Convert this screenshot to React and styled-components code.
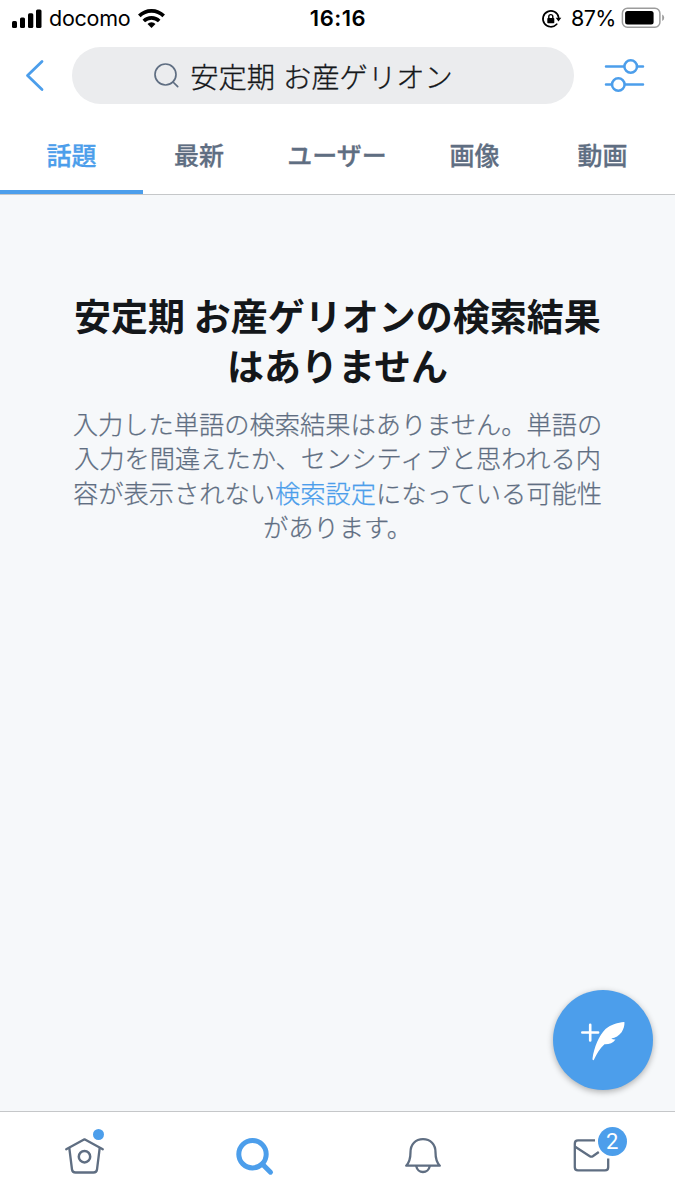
import React, { useState } from 'react';
import styled, { createGlobalStyle } from 'styled-components';

const colors = {
    blue: '#4c9eeb',
    gray: '#5f6e82',
    text: '#14171a',
    page: '#f6f8fa',
    line: '#c5c7c9',
};

const GlobalStyle = createGlobalStyle`
    * {
        box-sizing: border-box;
    }

    body {
        margin: 0;
        font-family: Inter, 'Noto Sans CJK JP', sans-serif;
        background-color: #fff;
    }

    button {
        padding: 0;
        border: none;
        background: none;
        font-family: inherit;
        cursor: pointer;
    }
`;

const Screen = styled.div`
    display: flex;
    flex-direction: column;
    height: 1200px;
    width: 675px;
    overflow: hidden;
    background-color: #fff;
`;

const Icon = styled.svg`
    display: block;
    flex: none;
    overflow: visible;
    fill: none;
    stroke: ${props => props.color || 'none'};
    stroke-linecap: ${props => props.$cap || 'round'};
    stroke-linejoin: round;
`;

const StatusBar = styled.div`
    display: grid;
    grid-template-columns: 1fr auto 1fr;
    align-items: center;
    height: 37px;
    padding: 0 11px 0 12px;
    color: #000;
    font-size: 21.5px;
    line-height: 37px;
`;

const StatusGroup = styled.div`
    display: flex;
    align-items: center;
    justify-content: ${props => props.$align || 'flex-start'};
    gap: ${props => props.$gap};
`;

const Carrier = styled.span`
    margin-left: -1px;
    letter-spacing: -0.25px;
`;

const Clock = styled.span`
    font-size: 22px;
    font-weight: 600;
    letter-spacing: 0.5px;
`;

const Percent = styled.span`
    margin: 0 -2px 0 2px;
    letter-spacing: -0.5px;
`;

const Header = styled.header`
    display: flex;
    align-items: center;
    height: 77px;
    padding: 0 31px 0 25px;
`;

const SearchField = styled.div`
    display: flex;
    align-items: center;
    justify-content: center;
    gap: 10px;
    width: 502px;
    height: 57px;
    margin: 0 31px 0 27px;
    border-radius: 29px;
    background-color: #ebecee;
    color: ${colors.text};
    font-size: 28.3px;
    font-weight: 300;
    padding-right: 39px;
`;

const Query = styled.span`
    padding-top: 5px;
    line-height: 52px;
    white-space: nowrap;
    -webkit-text-stroke: 0.3px currentColor;
`;

const Tabs = styled.nav`
    display: flex;
    height: 81px;
    border-bottom: 1px solid ${colors.line};
`;

const Tab = styled.button`
    display: flex;
    align-items: center;
    justify-content: center;
    flex: none;
    width: ${props => props.$width}px;
    padding-top: 4px;
    border-bottom: 4px solid ${props => (props.$active ? colors.blue : 'transparent')};
    color: ${props => (props.$active ? colors.blue : colors.gray)};
    font-size: 25px;
    font-weight: 500;
    -webkit-text-stroke: 0.3px currentColor;
    white-space: nowrap;
`;

const Results = styled.main`
    flex: 1;
    display: flex;
    flex-direction: column;
    align-items: center;
    position: relative;
    padding-top: 98px;
    background-color: ${colors.page};
    text-align: center;
`;

const Title = styled.h1`
    margin: 0;
    color: ${colors.text};
    font-size: 37px;
    font-weight: 700;
    line-height: 50px;
    white-space: nowrap;
`;

const Message = styled.p`
    margin: 15px 0 0;
    color: ${colors.gray};
    font-size: 25.25px;
    font-weight: 300;
    line-height: 34.3px;
    white-space: nowrap;
    -webkit-text-stroke: 0.25px currentColor;
`;

const SettingsLink = styled.a`
    color: ${colors.blue};
    text-decoration: none;
`;

const ComposeButton = styled.button`
    position: absolute;
    right: 22px;
    bottom: 21px;
    display: flex;
    align-items: center;
    justify-content: center;
    width: 100px;
    height: 100px;
    border-radius: 50%;
    background-color: ${colors.blue};
    box-shadow: 0 2px 6px rgba(0, 0, 0, 0.3);
`;

const BottomBar = styled.nav`
    display: grid;
    grid-template-columns: repeat(4, 1fr);
    height: 89px;
    padding-left: 1px;
    border-top: 1px solid ${colors.line};
`;

const BarItem = styled.button`
    display: flex;
    justify-content: center;
    padding-top: 16px;
`;

const IconWrap = styled.span`
    position: relative;
    display: block;
    height: 56px;
`;

const Dot = styled.span`
    position: absolute;
    top: 1px;
    right: 1px;
    width: 11px;
    height: 11px;
    border-radius: 50%;
    background-color: ${colors.blue};
`;

const Badge = styled.span`
    position: absolute;
    top: -1px;
    right: -18px;
    width: 29px;
    height: 29px;
    border-radius: 50%;
    background-color: ${colors.blue};
    color: #fff;
    font-family: Roboto, sans-serif;
    font-size: 22px;
    font-weight: 400;
    line-height: 29px;
    text-align: center;
`;

const tabs = [
    { label: '話題', width: 143 },
    { label: '最新', width: 112 },
    { label: 'ユーザー', width: 164 },
    { label: '画像', width: 111 },
    { label: '動画', width: 145 },
];

const Signal = () => (
    <Icon width="30" height="20" viewBox="0 0 30 20">
        <g fill="#000">
            <rect x="0" y="12" width="5" height="7" rx="1.5" />
            <rect x="8" y="8.5" width="5" height="10.5" rx="1.5" />
            <rect x="16" y="4.2" width="5.3" height="14.8" rx="1.5" />
            <rect x="24" y="0.5" width="5.5" height="18.5" rx="1.5" />
        </g>
    </Icon>
);

const Wifi = () => (
    <Icon width="27" height="20" viewBox="0 0 27 20" color="#000" $cap="butt" strokeWidth="3.6">
        <path d="M1.3 6.9a17.3 17.3 0 0 1 24.4 0" />
        <path d="M5.8 12a11 11 0 0 1 15.4 0" />
        <path d="M13.5 19l-4-4a5.7 5.7 0 0 1 8 0z" fill="#000" stroke="none" />
    </Icon>
);

const RotationLock = () => (
    <Icon width="20" height="18" viewBox="0 0 20 18" color="#000" strokeWidth="1.7">
        <path d="M14.7 14.2A7.9 7.9 0 1 1 16.6 7.3" />
        <path d="M13.7 7.7h5.6l-2.8 3.7z" fill="#000" stroke="none" />
        <rect x="5.3" y="8" width="7" height="5.2" rx="0.7" fill="#000" stroke="none" />
        <path d="M6.8 8V6.6a2 2 0 0 1 4 0V8" strokeWidth="1.4" />
    </Icon>
);

const Battery = () => (
    <Icon width="43" height="21" viewBox="0 0 43 21">
        <rect x="1.4" y="0.2" width="37.5" height="19" rx="5" stroke="#9c9c9c" strokeWidth="1.5" />
        <rect x="4.1" y="2.9" width="28.5" height="13.6" rx="2.5" fill="#000" />
        <path d="M41.2 6.5q2 1 2 3.3t-2 3.3z" fill="#9c9c9c" />
    </Icon>
);

const Back = () => (
    <Icon width="20" height="32" viewBox="0 0 20 32" color={colors.blue} strokeWidth="2.8">
        <path d="M17 1.5L2.5 15.500 17 29.500" />
    </Icon>
);

const SearchOutline = () => (
    <Icon width="26" height="26" viewBox="0 0 26 26" color={colors.gray} strokeWidth="1.7">
        <circle cx="11.5" cy="11.5" r="10.5" />
        <path d="M19 19l4.7 4.7" />
    </Icon>
);

const Filters = () => (
    <Icon width="39" height="34" viewBox="0 0 39 34" color={colors.blue} strokeWidth="2.5">
        <path d="M1 7.5h18M32 7.5h6M1 25.5h6M20 25.5h18" />
        <circle cx="25.7" cy="7.5" r="6.3" />
        <circle cx="13.3" cy="25.5" r="6.3" />
    </Icon>
);

const Feather = () => (
    <Icon width="44" height="40" viewBox="0 0 44 40">
        <path d="M1.3 12.5h15.8M9.2 4.8v15.6" stroke="#fff" strokeWidth="2.6" />
        <path
            d="M43 2C37 2.700 30 4.500 24.500 9C18 15.500 13 27.500 11.500 38.500C11.400 40.700 12.700 40.700 13.300 39C15.500 34 19 28.500 23.500 24.300C28 24.500 32 23 34.500 19.500C33 19.800 31.500 19.500 30.300 18.600C34.500 18 38 15.700 40.600 12.300C42.600 9 43.500 6 43.500 2.600Q43.500 2 43 2z"
            fill="#fff"
        />
    </Icon>
);

const Home = () => (
    <Icon width="40" height="48" viewBox="0 0 40 48" color={colors.gray} strokeWidth="2.3">
        <path d="M1.2 21.2L19.500 11.300l18.300 9.900" />
        <path d="M4.300 20l2.700 21.500q.4 3 3.500 3h18q3.100 0 3.500-3L34.700 20" />
        <circle cx="19.500" cy="28.700" r="5.700" strokeWidth="2.5" />
    </Icon>
);

const SearchBold = () => (
    <Icon width="36" height="48" viewBox="0 0 36 48" color={colors.blue} strokeWidth="5">
        <circle cx="16.500" cy="26.200" r="13.700" />
        <path d="M26.500 36.200l8 8" />
    </Icon>
);

const Bell = () => (
    <Icon width="35" height="48" viewBox="0 0 35 48" color={colors.gray} strokeWidth="2.3">
        <path d="M1.200 37.700C4.500 34.200 5.500 30.200 5.500 24.200C5.500 16.200 10.500 11.200 18 11.200S30.500 16.200 30.500 24.200C30.500 30.200 31.500 34.200 34.800 37.700z" />
        <path d="M11.300 38.200a6.800 7 0 0 0 13.400 0" />
    </Icon>
);

const Mail = () => (
    <Icon width="36" height="48" viewBox="0 0 36 48" color={colors.gray} $cap="butt" strokeWidth="2.3">
        <path d="M22 12.400H5Q1.800 12.400 1.800 15.700v23.500q0 3.200 3.200 3.200h27q3.200 0 3.200-3.200V30.500" />
        <path d="M1.800 18.500l15 9.700q1.500 1 3 0l6-4.200" />
    </Icon>
);

function App() {
    const [activeTab, setActiveTab] = useState('話題');

    return (
        <>
            <GlobalStyle />
            <Screen>
                <StatusBar>
                    <StatusGroup $gap="8px">
                        <Signal />
                        <Carrier>docomo</Carrier>
                        <Wifi />
                    </StatusGroup>
                    <Clock>16:16</Clock>
                    <StatusGroup $gap="7px" $align="flex-end">
                        <RotationLock />
                        <Percent>87%</Percent>
                        <Battery />
                    </StatusGroup>
                </StatusBar>
                <Header>
                    <button aria-label="戻る"><Back /></button>
                    <SearchField>
                        <SearchOutline />
                        <Query>安定期 お産ゲリオン</Query>
                    </SearchField>
                    <button aria-label="フィルター"><Filters /></button>
                </Header>
                <Tabs>
                    {tabs.map(({ label, width }) => (
                        <Tab
                            key={label}
                            $width={width}
                            $active={label === activeTab}
                            onClick={() => setActiveTab(label)}
                        >
                            {label}
                        </Tab>
                    ))}
                </Tabs>
                <Results>
                    <Title>
                        安定期 お産ゲリオンの検索結果<br />
                        はありません
                    </Title>
                    <Message>
                        入力した単語の検索結果はありません。単語の<br />
                        入力を間違えたか、センシティブと思われる内<br />
                        容が表示されない<SettingsLink>検索設定</SettingsLink>になっている可能性<br />
                        があります。
                    </Message>
                    <ComposeButton aria-label="ツイート"><Feather /></ComposeButton>
                </Results>
                <BottomBar>
                    <BarItem aria-label="ホーム">
                        <IconWrap><Home /><Dot /></IconWrap>
                    </BarItem>
                    <BarItem aria-label="検索">
                        <IconWrap><SearchBold /></IconWrap>
                    </BarItem>
                    <BarItem aria-label="通知">
                        <IconWrap><Bell /></IconWrap>
                    </BarItem>
                    <BarItem aria-label="メッセージ">
                        <IconWrap><Mail /><Badge>2</Badge></IconWrap>
                    </BarItem>
                </BottomBar>
            </Screen>
        </>
    );
}

export default App;
